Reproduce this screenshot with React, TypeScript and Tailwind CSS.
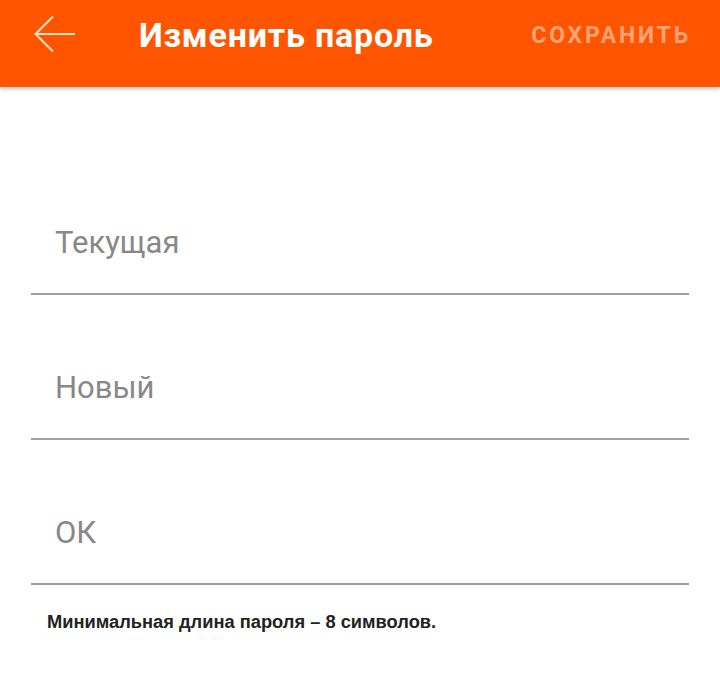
export default function App() {
  return (
    <div className="w-[720px] h-[678px] bg-white relative overflow-hidden" style={{ fontFamily: "Roboto, sans-serif" }}>
      <div className="h-[87px] bg-[#ff5500] flex items-start shadow-[0_2px_4px_rgba(0,0,0,0.25)] relative z-10">
        <div className="w-[139px] h-[70px] flex items-center pl-[34px]">
          <svg width="42" height="38" viewBox="0 0 42 38" fill="none" stroke="#ffe6c4" strokeWidth="2">
            <path d="M41 18H1.5M19 0.5L1.5 18l17.5 17.5" />
          </svg>
        </div>
        <div className="flex-1 h-[70px] flex items-center">
          <span className="text-white font-bold text-[34px] tracking-[0.8px] leading-none">Изменить пароль</span>
        </div>
        <div className="h-[70px] flex items-center pr-[29px]">
          <span className="text-[#ffa377] font-bold text-[23px] tracking-[2.8px] leading-none">СОХРАНИТЬ</span>
        </div>
      </div>
      <div className="px-[31px] pt-[120px]">
        {["Текущая", "Новый", "ОК"].map((t) => (
          <div key={t} className="h-[145px] flex flex-col justify-end first:h-[88px]">
            <div className="text-[31px] text-[#888888] pl-[24px] pb-[35px] leading-none">{t}</div>
            <div className="h-[2px] bg-[#a0a0a0]" />
          </div>
        ))}
        <div className="pl-[16px] pt-[23px] text-[18.3px] font-bold text-[#222]" style={{ fontFamily: "'Liberation Sans', Arial, sans-serif" }}>
          Минимальная длина пароля – 8 символов.
        </div>
      </div>
    </div>
  );
}
